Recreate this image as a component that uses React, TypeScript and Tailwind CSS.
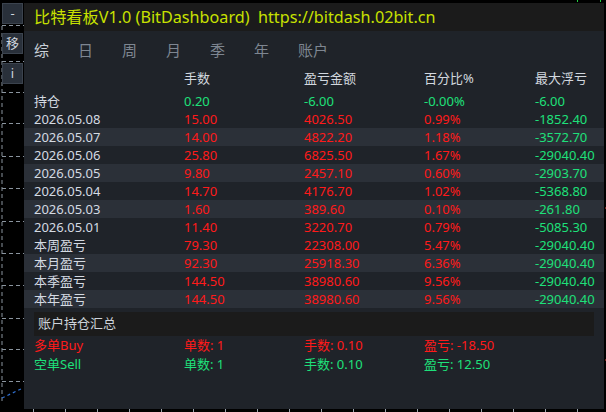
import React from "react";

type Row = { label: string; lots: string; pnl: string; pct: string; maxLoss: string; light: boolean; green?: boolean };

const rows: Row[] = [
    { label: "持仓", lots: "0.20", pnl: "-6.00", pct: "-0.00%", maxLoss: "-6.00", light: false, green: true },
    { label: "2026.05.08", lots: "15.00", pnl: "4026.50", pct: "0.99%", maxLoss: "-1852.40", light: false },
    { label: "2026.05.07", lots: "14.00", pnl: "4822.20", pct: "1.18%", maxLoss: "-3572.70", light: true },
    { label: "2026.05.06", lots: "25.80", pnl: "6825.50", pct: "1.67%", maxLoss: "-29040.40", light: false },
    { label: "2026.05.05", lots: "9.80", pnl: "2457.10", pct: "0.60%", maxLoss: "-2903.70", light: true },
    { label: "2026.05.04", lots: "14.70", pnl: "4176.70", pct: "1.02%", maxLoss: "-5368.80", light: false },
    { label: "2026.05.03", lots: "1.60", pnl: "389.60", pct: "0.10%", maxLoss: "-261.80", light: true },
    { label: "2026.05.01", lots: "11.40", pnl: "3220.70", pct: "0.79%", maxLoss: "-5085.30", light: false },
    { label: "本周盈亏", lots: "79.30", pnl: "22308.00", pct: "5.47%", maxLoss: "-29040.40", light: false },
    { label: "本月盈亏", lots: "92.30", pnl: "25918.30", pct: "6.36%", maxLoss: "-29040.40", light: true },
    { label: "本季盈亏", lots: "144.50", pnl: "38980.60", pct: "9.56%", maxLoss: "-29040.40", light: false },
    { label: "本年盈亏", lots: "144.50", pnl: "38980.60", pct: "9.56%", maxLoss: "-29040.40", light: true },
];

const tabs = ["综", "日", "周", "月", "季", "年", "账户"];

const gridLines = [25, 61, 92, 123, 156, 188, 221, 253, 285, 318, 349, 381];

const ChartBackdrop = () => (
    <svg className="absolute inset-0" width="606" height="412">
        <line x1="2" y1="26" x2="2" y2="404" stroke="#8a949e" strokeWidth="1" strokeDasharray="4 3" />
        {
            gridLines.map((y) => (
                <line key={y} x1="2" y1={y + 0.5} x2="24" y2={y + 0.5} stroke="#8a949e" strokeWidth="1" strokeDasharray="4 3" />
            ))
        }
        <line x1="2" y1="398" x2="23" y2="388" stroke="#2f6fd0" strokeWidth="1.2" strokeDasharray="3 3" />
        {
            [33, 65, 97, 129, 161, 193, 225, 257, 289, 321, 353, 385, 417, 449, 481, 513, 545, 577].map((x) => (
                <line key={x} x1={x + 0.5} y1="409" x2={x + 0.5} y2="412" stroke="#9aa3ad" strokeWidth="1" />
            ))
        }
        <line x1="605" y1="208" x2="606" y2="208" stroke="#e04030" strokeWidth="1" />
        <line x1="605" y1="360" x2="606" y2="360" stroke="#e04030" strokeWidth="1" />
        <line x1="577.5" y1="0" x2="577.5" y2="2" stroke="#20d040" strokeWidth="1" />
        <line x1="600.5" y1="0" x2="600.5" y2="2" stroke="#20d040" strokeWidth="1" />
    </svg>
);

const SideButton = ({ label }: { label: string }) => (
    <button type="button" className="w-[21px] h-[21px] flex items-center justify-center bg-[#29303a] border border-[#3b434e] text-[#cfd6de] text-[13px] leading-none">
        {label}
    </button>
);

const App = () => {
    return (
        <div className="relative w-[606px] h-[412px] bg-black overflow-hidden font-['Noto_Sans','Noto_Sans_CJK_SC',sans-serif]">
            <ChartBackdrop />

            <div className="relative flex">
                <div className="w-[24px] flex flex-col gap-[9px] pt-[3px] pl-[2px]">
                    <SideButton label="-" />
                    <SideButton label="移" />
                    <SideButton label="i" />
                </div>

                <div className="w-[580px] h-[406px] mt-[3px] bg-[#1f2329] flex flex-col">
                    <div className="h-[28px] bg-[#1b1b1b] pl-[10px] flex items-center">
                        <span className="text-[16.2px] text-[#c8e100] whitespace-pre">
                            比特看板V1.0 (BitDashboard)  https://bitdash.02bit.cn
                        </span>
                    </div>

                    <nav className="h-[38px] pl-[10px] flex items-center">
                        {
                            tabs.map((tab, index) => (
                                <span key={tab} className={`w-[44px] text-[15px] ${index === 0 ? "text-[#c9d0d8]" : "text-[#7e8691]"}`}>
                                    {tab}
                                </span>
                            ))
                        }
                    </nav>

                    <div className="h-[18px] pl-[10px] grid grid-cols-[150px_120px_120px_111px_1fr] items-center text-[13px] text-[#d2d8df]">
                        <span></span>
                        <span>手数</span>
                        <span>盈亏金额</span>
                        <span>百分比%</span>
                        <span>最大浮亏</span>
                    </div>

                    <div className="mt-[5px] flex flex-col">
                        {
                            rows.map((row) => (
                                <div key={row.label} className={`h-[18px] pl-[10px] grid grid-cols-[150px_120px_120px_111px_1fr] items-center text-[13px] ${row.light ? "bg-[#2b3038]" : ""}`}>
                                    <span className="text-[#d4dae2]">{row.label}</span>
                                    <span className={row.green ? "text-[#1ee07a]" : "text-[#ff1a1a]"}>{row.lots}</span>
                                    <span className={row.green ? "text-[#1ee07a]" : "text-[#ff1a1a]"}>{row.pnl}</span>
                                    <span className={row.green ? "text-[#1ee07a]" : "text-[#ff1a1a]"}>{row.pct}</span>
                                    <span className="text-[#1ee07a]">{row.maxLoss}</span>
                                </div>
                            ))
                        }
                    </div>

                    <div className="mt-[4px] mx-[10px] h-[24px] bg-[#1b1b1b] pl-[4px] flex items-center">
                        <span className="text-[13px] text-[#cdd3da]">账户持仓汇总</span>
                    </div>

                    <div className="pl-[10px] h-[19px] grid grid-cols-[150px_120px_120px_1fr] items-center text-[13px] text-[#ff1a1a]">
                        <span>多单Buy</span>
                        <span>单数: 1</span>
                        <span>手数: 0.10</span>
                        <span>盈亏: -18.50</span>
                    </div>
                    <div className="pl-[10px] h-[19px] grid grid-cols-[150px_120px_120px_1fr] items-center text-[13px] text-[#1ee07a]">
                        <span>空单Sell</span>
                        <span>单数: 1</span>
                        <span>手数: 0.10</span>
                        <span>盈亏: 12.50</span>
                    </div>
                </div>
            </div>
        </div>
    );
};

export default App;
